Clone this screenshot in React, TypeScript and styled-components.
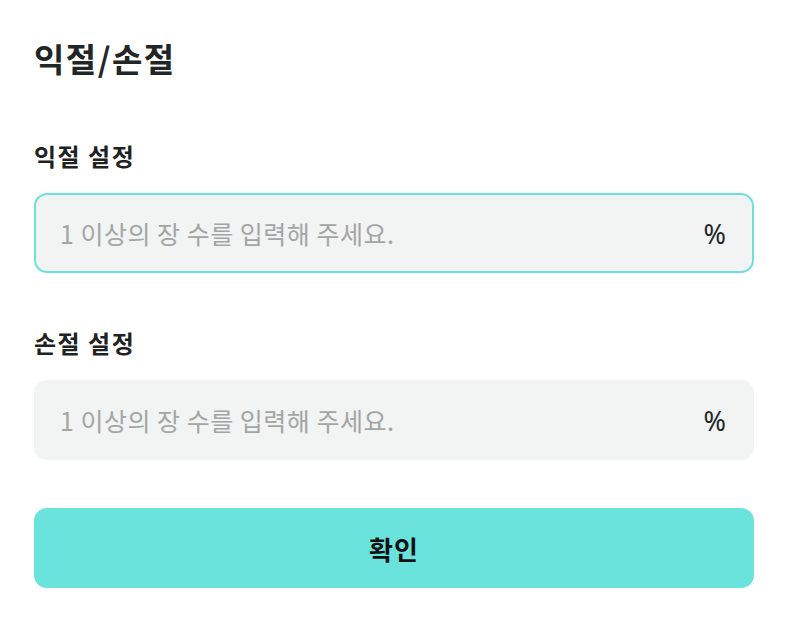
import styled, { createGlobalStyle } from 'styled-components';

const GlobalStyle = createGlobalStyle`
  body {
    margin: 0;
    background: #ffffff;
    font-family: "Noto Sans CJK KR", "Noto Sans", sans-serif;
  }
`;

const fields = [
  { label: '익절 설정', active: true },
  { label: '손절 설정', active: false },
];

function App() {
  return (
    <>
      <GlobalStyle />
      <Page>
        <Title>익절/손절</Title>
        {fields.map((f) => (
          <Field key={f.label}>
            <Label>{f.label}</Label>
            <InputBox $active={f.active}>
              <Input placeholder="1 이상의 장 수를 입력해 주세요." />
              <Unit>%</Unit>
            </InputBox>
          </Field>
        ))}
        <ConfirmButton>확인</ConfirmButton>
      </Page>
    </>
  );
}

//*STYLES
const Page = styled.main`
  display: flex;
  flex-direction: column;
  width: 720px;
  padding: 36px 0 0 34px;
`;

const Title = styled.h1`
  margin: 0 0 60px;
  font-size: 33px;
  line-height: 44px;
  font-weight: 700;
  color: #222626;
  letter-spacing: 1.5px;
`;

const Field = styled.section`
  display: flex;
  flex-direction: column;
  gap: 21px;
  margin-bottom: 54px;
  &:last-of-type {
    margin-bottom: 48px;
  }
`;

const Label = styled.label`
  font-size: 24px;
  line-height: 32px;
  font-weight: 700;
  color: #1f2222;
  letter-spacing: 1.5px;
`;

const InputBox = styled.div<{ $active: boolean }>`
  display: flex;
  align-items: center;
  box-sizing: border-box;
  height: 80px;
  padding: 0 26px 0 24px;
  background: #f2f3f3;
  border: 2px solid ${(p) => (p.$active ? '#6ae2da' : '#f2f3f3')};
  border-radius: 13px;
`;

const Input = styled.input`
  flex: 1;
  min-width: 0;
  border: none;
  outline: none;
  background: transparent;
  font-family: "Noto Sans CJK KR", "Noto Sans", sans-serif;
  font-size: 25px;
  letter-spacing: 0.5px;
  color: #222;
  padding: 0;
  &::placeholder {
    color: #a3a5a5;
  }
`;

const Unit = styled.span`
  font-family: "Noto Sans", sans-serif;
  font-size: 27px;
  color: #222626;
`;

const ConfirmButton = styled.button`
  height: 80px;
  border: none;
  border-radius: 13px;
  background: #69e3dc;
  font-family: "Noto Sans CJK KR", "Noto Sans", sans-serif;
  font-size: 26px;
  font-weight: 700;
  letter-spacing: 1px;
  color: #111;
  cursor: pointer;
`;

export default App;
